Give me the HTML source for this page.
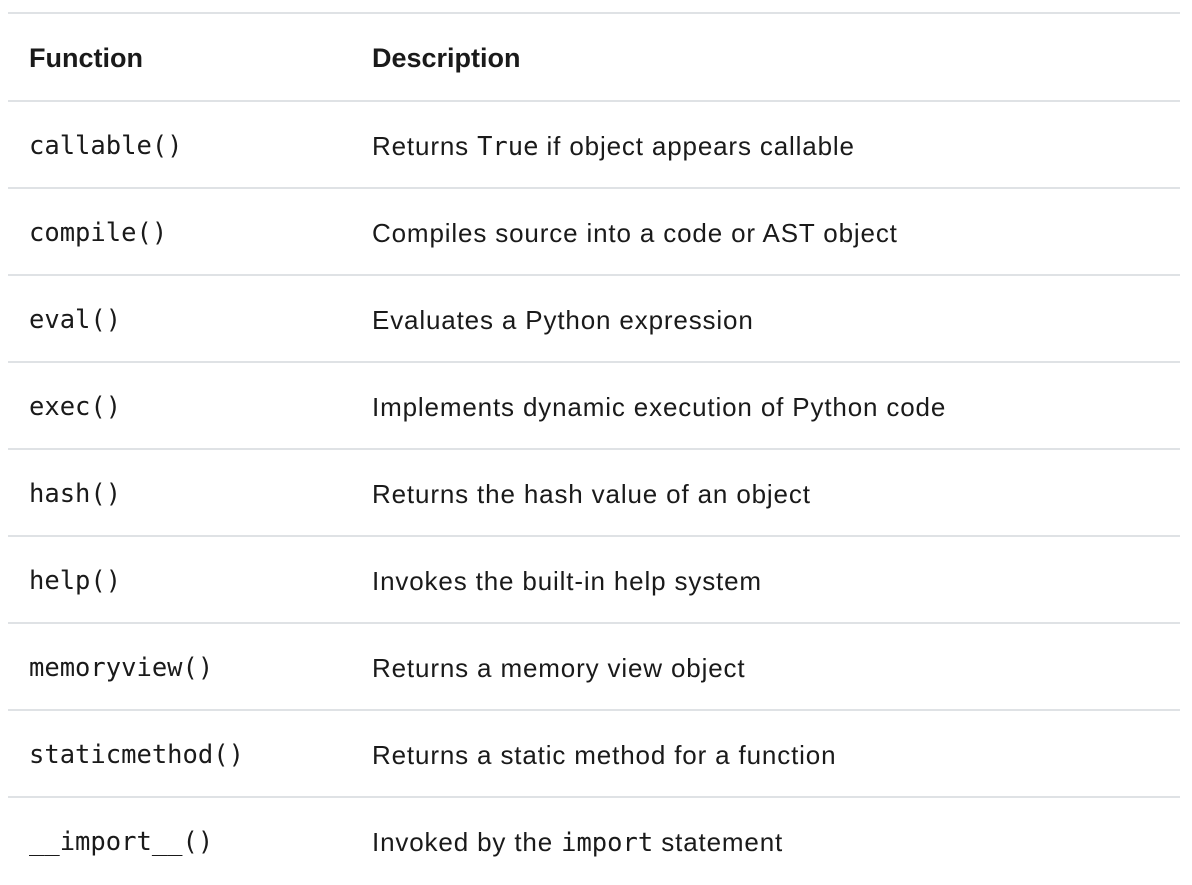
<!DOCTYPE html>
<html><head><meta charset="utf-8"><style>
html,body{margin:0;padding:0;background:#fff;width:1192px;height:882px;overflow:hidden}
.t{position:absolute;left:8px;top:12px;width:1172px}
.r{height:87px;border-top:2px solid #dfe2e5;position:relative;box-sizing:border-box}
.h{height:88px}
.c1,.c2{position:absolute;top:2px;line-height:84px;white-space:nowrap;color:#1a1a1a}
.c1{left:21px}
.c2{left:364px;font-family:"Liberation Sans",sans-serif;font-size:26px;letter-spacing:0.85px}
.h .c1,.h .c2{font-family:"Liberation Sans",sans-serif;font-weight:bold;font-size:27px;line-height:88px;top:0;letter-spacing:0}
code,.m{font-family:"DejaVu Sans Mono","Liberation Mono",monospace;font-size:25.5px;letter-spacing:0}
</style></head><body>
<div class="t">
<div class="r h"><div class="c1">Function</div><div class="c2">Description</div></div>
<div class="r"><div class="c1 m">callable()</div><div class="c2">Returns <code>True</code> if object appears callable</div></div>
<div class="r"><div class="c1 m">compile()</div><div class="c2">Compiles source into a code or AST object</div></div>
<div class="r"><div class="c1 m">eval()</div><div class="c2">Evaluates a Python expression</div></div>
<div class="r"><div class="c1 m">exec()</div><div class="c2">Implements dynamic execution of Python code</div></div>
<div class="r"><div class="c1 m">hash()</div><div class="c2">Returns the hash value of an object</div></div>
<div class="r"><div class="c1 m">help()</div><div class="c2">Invokes the built-in help system</div></div>
<div class="r"><div class="c1 m">memoryview()</div><div class="c2">Returns a memory view object</div></div>
<div class="r"><div class="c1 m">staticmethod()</div><div class="c2">Returns a static method for a function</div></div>
<div class="r"><div class="c1 m">__import__()</div><div class="c2">Invoked by the <code>import</code> statement</div></div>
</div>
</body></html>
